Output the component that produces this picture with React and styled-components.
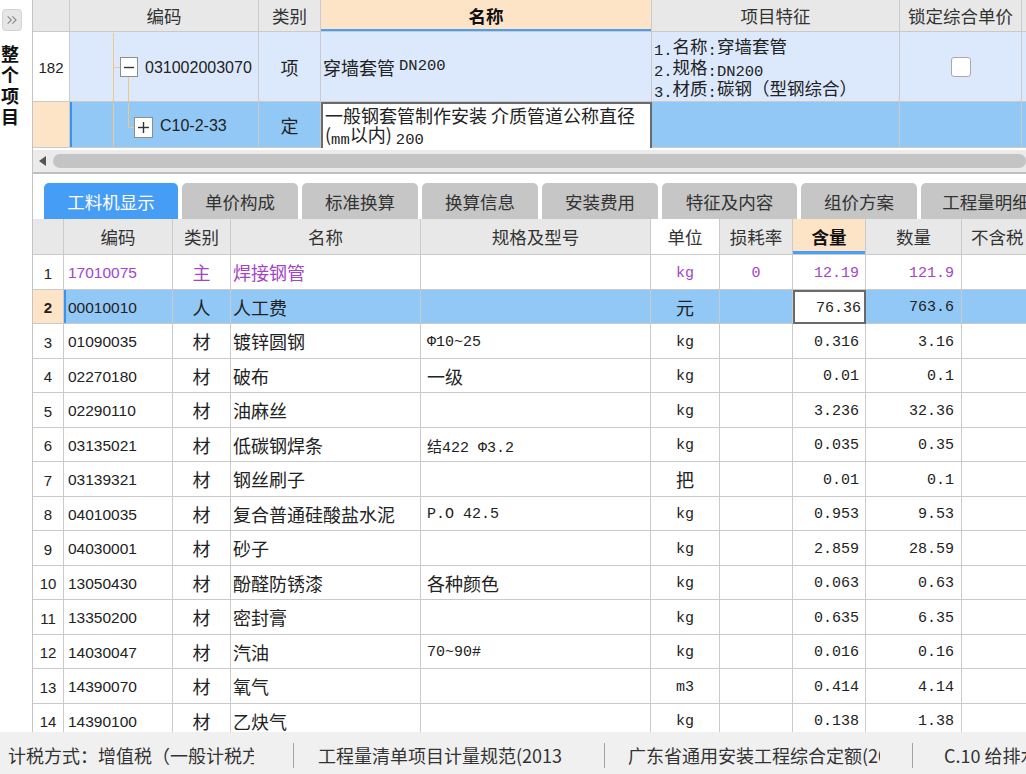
import React from 'react';
import styled, { createGlobalStyle } from 'styled-components';
import { ChevronsRight } from 'lucide-react';

const LINE = '#cacaca';
const TREE = '#f5c585';
const PEACH = '#fde4c6';
const LIGHT_ROW = '#dce9fc';
const SELECTED_ROW = '#92c8f5';
const ACCENT = '#a444c6';

const fontStacks = {
    cjk: '"Noto Sans CJK SC", "Noto Sans", sans-serif',
    code: '"Liberation Sans", "Noto Sans CJK SC", sans-serif',
    mono: '"Liberation Mono", "Noto Sans CJK SC", monospace'
};
const fontSizes = { cjk: 18, code: 15.5, mono: 15 };

const GlobalStyle = createGlobalStyle`
    html, body {
        margin: 0;
        padding: 0;
        background: #fff;
    }
    body {
        width: 1026px;
        height: 774px;
        overflow: hidden;
        font-family: ${fontStacks.cjk};
        color: #222;
    }
    * {
        box-sizing: border-box;
    }
`;

const Screen = styled.div`
    display: grid;
    grid-template-columns: 32px 1fr;
    grid-template-rows: 732px 42px;
    width: 1026px;
    height: 774px;
`;

const Sidebar = styled.div`
    display: flex;
    flex-direction: column;
    align-items: flex-start;
    padding-top: 9px;
`;

const ExpandButton = styled.div`
    display: flex;
    align-items: center;
    justify-content: center;
    width: 20px;
    height: 22px;
    margin-left: 2px;
    background: #e6e6e6;
    border: 1px solid #d2d2d2;
    border-radius: 4px;
    color: #8a8a8a;
`;

const SideTitle = styled.div`
    width: 20px;
    margin-top: 12px;
    font-size: 18px;
    line-height: 21px;
    font-weight: 700;
    color: #111;
    text-align: center;
    word-break: break-all;
`;

const Panel = styled.div`
    display: flex;
    flex-direction: column;
    min-width: 0;
    overflow: hidden;
    border-left: 1px solid #c4c4c4;
`;

const TopGrid = styled.div`
    display: grid;
    grid-template-columns: 37px 189px 62px 331px 248px 122px 100px;
    grid-template-rows: 32px 70px 46px;
    flex-shrink: 0;
    height: 148px;
    overflow: hidden;
`;

const HeadCell = styled.div`
    display: flex;
    align-items: center;
    justify-content: ${p => (p.$left ? 'flex-start' : 'center')};
    padding-left: ${p => (p.$left ? 9 : 0)}px;
    overflow: hidden;
    white-space: nowrap;
    background: ${p => (p.$active ? PEACH : p.$plain ? '#fff' : '#e8e8e8')};
    border-right: 1px solid ${LINE};
    border-bottom: 1px solid ${LINE};
    box-shadow: ${p => (p.$active ? `inset 0 -${p.$mark || 3}px 0 #4a9ff5` : 'none')};
    font-size: 17.5px;
    font-weight: ${p => (p.$active ? 700 : 400)};
    color: ${p => (p.$active ? '#111' : '#333')};
`;

const Cell = styled.div`
    display: flex;
    align-items: center;
    justify-content: ${p => (p.$align === 'center' ? 'center' : p.$align === 'right' ? 'flex-end' : 'flex-start')};
    padding: ${p => (p.$font && p.$font !== 'cjk' ? 2 : 0)}px ${p => p.$pad ?? 4}px 0;
    overflow: hidden;
    white-space: nowrap;
    background: ${p => p.$bg || 'transparent'};
    border-right: 1px solid ${LINE};
    border-bottom: 1px solid ${LINE};
    box-shadow: ${p => (p.$current ? 'inset 2px 0 0 #3b93f0' : 'none')};
    font-family: ${p => fontStacks[p.$font || 'cjk']};
    font-size: ${p => p.$size || fontSizes[p.$font || 'cjk']}px;
    font-weight: ${p => (p.$bold ? 700 : 400)};
`;

const Latin = styled.span`
    font-family: ${fontStacks.mono};
    font-size: 15.5px;
    line-height: 1;
    vertical-align: -2px;
`;

const FeatureText = styled.div`
    font-size: 17.5px;
    white-space: nowrap;
`;

const FeatureLine = styled.div`
    height: 21px;
    line-height: 21px;
`;

const EditBox = styled.div`
    padding: 2px 2px 0;
    overflow: hidden;
    background: #fff;
    border: 2px solid #6a6a6a;
    border-bottom: 0;
    font-size: 18px;
    line-height: 19px;
    white-space: nowrap;
`;

const CheckBox = styled.div`
    width: 20px;
    height: 20px;
    background: #fff;
    border: 1px solid #a9a9a9;
    border-radius: 3px;
`;

const GuideSvg = styled.svg`
    flex-shrink: 0;
    display: block;
`;

const HScroll = styled.div`
    display: flex;
    align-items: center;
    gap: 7px;
    flex-shrink: 0;
    height: 22px;
    margin-top: 2px;
    padding-left: 6px;
    background: #ebebeb;
`;

const ScrollThumb = styled.div`
    flex: 1;
    height: 14px;
    border-radius: 7px;
    background: #c4c4c4;
`;

const Splitter = styled.div`
    flex-shrink: 0;
    height: 2px;
    background: #bfbfbf;
`;

const TabBar = styled.div`
    display: flex;
    gap: 4px;
    flex-shrink: 0;
    margin-top: 9px;
    padding-left: 11px;
    height: 36px;
    overflow: hidden;
`;

const Tab = styled.div`
    display: flex;
    align-items: center;
    justify-content: center;
    flex-shrink: 0;
    width: ${p => p.$w}px;
    border-radius: 5px 5px 0 0;
    background: ${p => (p.$active ? '#469df6' : '#c6c6c6')};
    color: ${p => (p.$active ? '#fff' : '#333')};
    font-size: 17.5px;
    white-space: nowrap;
`;

const BottomGrid = styled.div`
    display: flex;
    flex-direction: column;
    flex: 1;
    min-height: 0;
    overflow: hidden;
`;

const GridRow = styled.div`
    display: grid;
    grid-template-columns: 31px 109px 58px 190px 230px 69px 73px 73px 96px 100px;
    flex-shrink: 0;
    height: ${p => p.$h}px;
    background: ${p => (p.$selected ? SELECTED_ROW : '#fff')};
    color: ${p => (p.$accent ? ACCENT : '#222')};
`;

const RowNum = styled(Cell)`
    justify-content: center;
    padding: 2px 0 0;
    color: #222;
    background: ${p => (p.$selected ? PEACH : '#fff')};
    font-family: ${fontStacks.code};
    font-size: 15px;
    font-weight: ${p => (p.$selected ? 700 : 400)};
`;

const EditNumber = styled(Cell)`
    background: #fff;
    border: 2px solid #6a6a6a;
`;

const StatusBar = styled.div`
    grid-column: 1 / -1;
    display: flex;
    align-items: center;
    padding: 4px 0 0 8px;
    background: #f0f0f0;
    color: #333;
    font-size: 18px;
    overflow: hidden;
`;

const StatusItem = styled.div`
    flex-shrink: 0;
    width: ${p => p.$w}px;
    overflow: hidden;
    white-space: nowrap;
`;

const Divider = styled.div`
    flex-shrink: 0;
    width: 1px;
    height: 25px;
    margin: 0 ${p => p.$after}px 0 ${p => p.$before}px;
    background: #a3a3a3;
`;

const TreeGuide = ({ expanded }) => (expanded ? (
    <GuideSvg width="75" height="69">
        <line x1="43.5" y1="0" x2="43.5" y2="69" stroke={TREE} />
        <line x1="43.5" y1="34.5" x2="50" y2="34.5" stroke={TREE} />
        <line x1="58.5" y1="44" x2="58.5" y2="69" stroke={TREE} />
        <rect x="50.5" y="24.5" width="17" height="19" fill="#fff" stroke="#8d8d8d" />
        <line x1="54" y1="34.5" x2="64" y2="34.5" stroke="#333" strokeWidth="1.4" />
    </GuideSvg>
) : (
    <GuideSvg width="90" height="45">
        <line x1="43.5" y1="0" x2="43.5" y2="45" stroke={TREE} />
        <line x1="58.5" y1="0" x2="58.5" y2="24.5" stroke={TREE} />
        <line x1="58.5" y1="24.5" x2="64" y2="24.5" stroke={TREE} />
        <rect x="64.5" y="14.5" width="18" height="20" fill="#fff" stroke="#8d8d8d" />
        <line x1="68" y1="24.5" x2="79" y2="24.5" stroke="#333" strokeWidth="1.4" />
        <line x1="73.5" y1="19" x2="73.5" y2="30" stroke="#333" strokeWidth="1.4" />
    </GuideSvg>
));

const tabs = [
    ['工料机显示', 134],
    ['单价构成', 116],
    ['标准换算', 116],
    ['换算信息', 116],
    ['安装费用', 116],
    ['特征及内容', 135],
    ['组价方案', 116],
    ['工程量明细', 130]
];

const materials = [
    ['17010075', '主', '焊接钢管', '', 'kg', '0', '12.19', '121.9'],
    ['00010010', '人', '人工费', '', '元', '', '76.36', '763.6'],
    ['01090035', '材', '镀锌圆钢', 'Φ10~25', 'kg', '', '0.316', '3.16'],
    ['02270180', '材', '破布', '一级', 'kg', '', '0.01', '0.1'],
    ['02290110', '材', '油麻丝', '', 'kg', '', '3.236', '32.36'],
    ['03135021', '材', '低碳钢焊条', '结422 Φ3.2', 'kg', '', '0.035', '0.35'],
    ['03139321', '材', '钢丝刷子', '', '把', '', '0.01', '0.1'],
    ['04010035', '材', '复合普通硅酸盐水泥', 'P.O 42.5', 'kg', '', '0.953', '9.53'],
    ['04030001', '材', '砂子', '', 'kg', '', '2.859', '28.59'],
    ['13050430', '材', '酚醛防锈漆', '各种颜色', 'kg', '', '0.063', '0.63'],
    ['13350200', '材', '密封膏', '', 'kg', '', '0.635', '6.35'],
    ['14030047', '材', '汽油', '70~90#', 'kg', '', '0.016', '0.16'],
    ['14390070', '材', '氧气', '', 'm3', '', '0.414', '4.14'],
    ['14390100', '材', '乙炔气', '', 'kg', '', '0.138', '1.38']
];

const fontFor = text => (/[A-Za-z0-9]/.test(text) ? 'mono' : 'cjk');

const MaterialRow = ({ index, row }) => {
    const [code, type, name, spec, unit, loss, amount, qty] = row;
    const selected = index === 1;
    return (
        <GridRow $h={index % 2 === 0 ? 35 : 34} $selected={selected} $accent={index === 0}>
            <RowNum $selected={selected}>{index + 1}</RowNum>
            <Cell $font="code" $current={selected}>{code}</Cell>
            <Cell $align="center">{type}</Cell>
            <Cell $pad={2}>{name}</Cell>
            <Cell $font={fontFor(spec)} $pad={6}>{spec}</Cell>
            <Cell $font={fontFor(unit)} $align="center">{unit}</Cell>
            <Cell $font="mono" $align="center">{loss}</Cell>
            {selected
                ? <EditNumber $font="mono" $align="right" $pad={3}>{amount}</EditNumber>
                : <Cell $font="mono" $align="right" $pad={6}>{amount}</Cell>}
            <Cell $font="mono" $align="right" $pad={7}>{qty}</Cell>
            <Cell />
        </GridRow>
    );
};

export default function App () {
    return (
        <React.Fragment>
            <GlobalStyle />
            <Screen>
                <Sidebar>
                    <ExpandButton><ChevronsRight size={16} strokeWidth={1.6} /></ExpandButton>
                    <SideTitle>整个项目</SideTitle>
                </Sidebar>
                <Panel>
                    <TopGrid>
                        <HeadCell />
                        <HeadCell>编码</HeadCell>
                        <HeadCell>类别</HeadCell>
                        <HeadCell $active $mark={2}>名称</HeadCell>
                        <HeadCell>项目特征</HeadCell>
                        <HeadCell>锁定综合单价</HeadCell>
                        <HeadCell />

                        <RowNum>182</RowNum>
                        <Cell $bg={LIGHT_ROW} $pad={0} $font="code" $size={16}>
                            <TreeGuide expanded />
                            031002003070
                        </Cell>
                        <Cell $bg={LIGHT_ROW} $align="center">项</Cell>
                        <Cell $bg={LIGHT_ROW} $pad={2}>穿墙套管&nbsp;<Latin>DN200</Latin></Cell>
                        <Cell $bg={LIGHT_ROW} $pad={2}>
                            <FeatureText>
                                <FeatureLine><Latin>1.</Latin>名称<Latin>:</Latin>穿墙套管</FeatureLine>
                                <FeatureLine><Latin>2.</Latin>规格<Latin>:DN200</Latin></FeatureLine>
                                <FeatureLine><Latin>3.</Latin>材质<Latin>:</Latin>碳钢（型钢综合）</FeatureLine>
                            </FeatureText>
                        </Cell>
                        <Cell $bg={LIGHT_ROW} $align="center"><CheckBox /></Cell>
                        <Cell $bg={LIGHT_ROW} $pad={1}>·</Cell>

                        <RowNum $selected />
                        <Cell $bg={SELECTED_ROW} $pad={0} $font="code" $size={16} $current>
                            <TreeGuide />
                            C10-2-33
                        </Cell>
                        <Cell $bg={SELECTED_ROW} $align="center">定</Cell>
                        <EditBox>
                            一般钢套管制作安装 介质管道公称直径<br />
                            (<Latin>mm</Latin>以内) <Latin>200</Latin>
                        </EditBox>
                        <Cell $bg={SELECTED_ROW} />
                        <Cell $bg={SELECTED_ROW} />
                        <Cell $bg={SELECTED_ROW} $pad={1}>·</Cell>
                    </TopGrid>

                    <HScroll>
                        <svg width="7" height="10" viewBox="0 0 7 10">
                            <path d="M7 0 L0 5 L7 10 Z" fill="#555" />
                        </svg>
                        <ScrollThumb />
                    </HScroll>
                    <Splitter />

                    <TabBar>
                        {tabs.map(([label, width], i) => (
                            <Tab key={label} $w={width} $active={i === 0}>{label}</Tab>
                        ))}
                    </TabBar>

                    <BottomGrid>
                        <GridRow $h={36}>
                            <HeadCell />
                            <HeadCell>编码</HeadCell>
                            <HeadCell>类别</HeadCell>
                            <HeadCell>名称</HeadCell>
                            <HeadCell>规格及型号</HeadCell>
                            <HeadCell $plain>单位</HeadCell>
                            <HeadCell>损耗率</HeadCell>
                            <HeadCell $active>含量</HeadCell>
                            <HeadCell>数量</HeadCell>
                            <HeadCell $left>不含税</HeadCell>
                        </GridRow>
                        {materials.map((row, i) => (
                            <MaterialRow key={row[0]} index={i} row={row} />
                        ))}
                    </BottomGrid>
                </Panel>

                <StatusBar>
                    <StatusItem $w={246}>计税方式：增值税（一般计税方法）</StatusItem>
                    <Divider $before={39} $after={24} />
                    <StatusItem $w={244}>工程量清单项目计量规范(2013-广东)</StatusItem>
                    <Divider $before={42} $after={23} />
                    <StatusItem $w={252}>广东省通用安装工程综合定额(2018)</StatusItem>
                    <Divider $before={32} $after={31} />
                    <StatusItem $w={120}>C.10 给排水、采暖、燃气工程</StatusItem>
                </StatusBar>
            </Screen>
        </React.Fragment>
    );
}
